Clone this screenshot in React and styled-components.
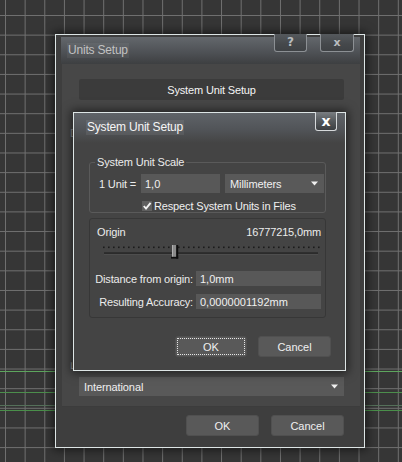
import React from "react";
import styled, { createGlobalStyle } from "styled-components";

const GlobalStyle = createGlobalStyle`
  html, body { margin: 0; padding: 0; background: #363636; }
  body { font-family: "Liberation Sans", Arial, sans-serif; font-size: 11px; }
  * { box-sizing: border-box; }
`;

const Desk = styled.main`
  position: relative;
  width: 402px;
  height: 462px;
  overflow: hidden;
  background-color: #363636;
  background-image:
    linear-gradient(#5da55d, #5da55d),
    linear-gradient(#4c8e4c, #4c8e4c),
    linear-gradient(#55705a, #55705a),
    linear-gradient(#4a8f4a, #4a8f4a),
    linear-gradient(to right, #707070 1px, transparent 1px),
    linear-gradient(to bottom, #707070 1px, transparent 1px);
  background-size: 100% 1px, 100% 1px, 100% 1px, 100% 1px, 19.65px 19.65px, 19.65px 19.65px;
  background-position: 0 371px, 0 392px, 0 405px, 0 410px, 5px 15px, 5px 15px;
  background-repeat: no-repeat, no-repeat, no-repeat, no-repeat, repeat, repeat;
`;

const Window = styled.section`
  position: absolute;
  left: ${(p) => p.$x}px;
  top: ${(p) => p.$y}px;
  width: ${(p) => p.$w}px;
  height: ${(p) => p.$h}px;
  border: 1px solid #dde5e5;
  background: ${(p) => p.$bg};
  display: flex;
  flex-direction: column;
  box-shadow: 0 0 9px 2px rgba(0, 0, 0, 0.55);
  z-index: ${(p) => p.$z};
`;

const TitleBar = styled.header`
  flex: none;
  height: ${(p) => p.$h}px;
  margin: ${(p) => p.$m};
  padding-left: ${(p) => p.$pl}px;
  display: flex;
  align-items: center;
  background: ${(p) =>
    p.$active
      ? "linear-gradient(#5f6368 0%, #515458 55%, #444 100%)"
      : "linear-gradient(#63676c 0%, #4d5054 60%, #3d3f41 100%)"};
`;

const TitleText = styled.span`
  font-size: 12px;
  letter-spacing: -0.2px;
  line-height: 15px;
  padding: 0 1px;
  color: ${(p) => (p.$active ? "#f6f6f6" : "#c2c2c2")};
  background: rgba(255, 255, 255, ${(p) => (p.$active ? 0.07 : 0.05)});
  margin-top: ${(p) => p.$mt || 0}px;
`;

const CaptionGroup = styled.div`
  position: absolute;
  top: -1px;
  left: ${(p) => p.$left}px;
  display: flex;
  gap: 13px;
`;

const CaptionButton = styled.div`
  width: ${(p) => p.$w}px;
  height: ${(p) => p.$h}px;
  border: 1px solid ${(p) => (p.$bright ? "#d6d9db" : "#8c9094")};
  border-top: none;
  border-radius: 0 0 3px 3px;
  background: ${(p) =>
    p.$bright
      ? "linear-gradient(#7a7e82, #55595c 50%, #3c3f42)"
      : "linear-gradient(#55595d, #45484b 60%, #3f4245)"};
  display: flex;
  align-items: center;
  justify-content: center;
  font-family: "DejaVu Sans", sans-serif;
  font-weight: bold;
  font-size: ${(p) => p.$fs}px;
  color: ${(p) => (p.$bright ? "#ffffff" : "#b8bcbf")};
  line-height: 1;
  padding-bottom: 1px;
`;

const OuterBody = styled.div`
  flex: 1;
  display: flex;
  flex-direction: column;
  padding: 0 4px 0 6px;
`;

const Panel = styled.div`
  flex: 1;
  display: flex;
  flex-direction: column;
  background: #474747;
  padding: 15px 16px 10px 17px;
  border-bottom: 1px solid #3c3c3c;
`;

const WideButton = styled.div`
  height: 21px;
  background: #3b3b3b;
  border-radius: 2px;
  color: #f4f4f4;
  display: flex;
  align-items: center;
  justify-content: center;
  letter-spacing: -0.15px;
`;

const HiddenLabel = styled.div`
  margin: ${(p) => p.$m};
  line-height: 13px;
  color: #8a8a8a;
  white-space: nowrap;
  position: relative;
  z-index: ${(p) => (p.$ghost ? 5 : "auto")};
  clip-path: ${(p) => (p.$ghost ? "inset(25% 0 0 0)" : "none")};
`;

const Spacer = styled.div`
  flex: 1;
`;

const Select = styled.div`
  height: 19px;
  width: ${(p) => (p.$w ? `${p.$w}px` : "auto")};
  background: #595959;
  color: #f0f0f0;
  display: flex;
  align-items: center;
  justify-content: space-between;
  padding: 0 6px 0 5px;
  letter-spacing: -0.1px;
`;

const ButtonRow = styled.div`
  display: flex;
  justify-content: flex-end;
  gap: ${(p) => p.$gap}px;
  margin: ${(p) => p.$m};
  padding: ${(p) => p.$p};
`;

const Button = styled.div`
  width: ${(p) => p.$w}px;
  height: 21px;
  background: #595959;
  border-radius: 3px;
  border: 1px solid #505050;
  color: #f0f0f0;
  display: flex;
  align-items: center;
  justify-content: center;
  outline: ${(p) => (p.$focus ? "1px dotted #e6e6e6" : "none")};
  outline-offset: -3px;
`;

const InnerBody = styled.div`
  flex: 1;
  display: flex;
  flex-direction: column;
  padding: 13px 14px 0 15px;
`;

const Group = styled.fieldset`
  margin: ${(p) => p.$m};
  padding: ${(p) => p.$p};
  border: 1px solid ${(p) => p.$border};
  border-radius: 3px;
  min-width: 0;
  color: #ececec;
`;

const Legend = styled.legend`
  padding: 0 2px;
  margin-left: -4px;
  line-height: 13px;
  color: #ececec;
  letter-spacing: -0.15px;
`;

const Row = styled.div`
  display: flex;
  align-items: center;
  height: ${(p) => p.$h}px;
  margin-top: ${(p) => p.$mt || 0}px;
`;

const FieldLabel = styled.span`
  width: ${(p) => p.$w}px;
  flex: none;
  white-space: nowrap;
  color: #ececec;
  letter-spacing: -0.15px;
  margin-right: ${(p) => p.$mr || 0}px;
  display: flex;
  justify-content: ${(p) => (p.$align === "right" ? "flex-end" : "flex-start")};
`;

const Input = styled.div`
  height: ${(p) => p.$h}px;
  width: ${(p) => (p.$w ? `${p.$w}px` : "auto")};
  flex: ${(p) => (p.$w ? "none" : 1)};
  background: #585858;
  color: #f0f0f0;
  display: flex;
  align-items: center;
  padding-left: 4px;
  margin-right: ${(p) => p.$mr || 0}px;
`;

const CheckRow = styled.label`
  display: flex;
  align-items: center;
  gap: 2px;
  height: 12px;
  margin: 7px 0 0 43px;
  color: #f0f0f0;
  letter-spacing: -0.15px;
`;

const OriginRow = styled.div`
  display: flex;
  justify-content: space-between;
  line-height: 13px;
  color: #ececec;
  letter-spacing: -0.15px;
`;

const SliderSvg = styled.svg`
  display: block;
  margin-top: 2px;
  width: 224px;
  height: 20px;
`;

const Arrow = () => (
  <svg width="7" height="5" viewBox="0 0 7 5">
    <path d="M0 0.5 H7 L3.5 4.5 Z" fill="#f0f0f0" />
  </svg>
);

const CheckBox = () => (
  <svg width="10" height="10" viewBox="0 0 10 10">
    <rect x="0" y="0" width="10" height="10" fill="#5f5f5f" />
    <path d="M1.8 5 L4 7.6 L8.6 1.8" fill="none" stroke="#f2f2f2" strokeWidth="1.9" />
  </svg>
);

const Slider = () => {
  const dots = [];
  for (let x = 6; x <= 221; x += 5) dots.push(x);
  return (
    <SliderSvg viewBox="0 0 224 20">
      {dots.map((x) => (
        <rect key={x} x={x} y="5.5" width="1.6" height="1.6" fill="#1c1c1c" />
      ))}
      <rect x="7" y="11.5" width="214" height="1.3" fill="#1a1a1a" />
      <rect x="7" y="12.8" width="214" height="0.8" fill="#555" />
      <rect x="75" y="4" width="4.5" height="12" fill="#8a8a8a" />
      <rect x="75" y="4" width="1" height="12" fill="#b0b0b0" />
      <rect x="79.2" y="4" width="2" height="13.6" fill="#0e0e0e" />
      <rect x="74" y="15.8" width="7.2" height="1.8" fill="#0e0e0e" />
    </SliderSvg>
  );
};

export default function App() {
  return (
    <>
      <GlobalStyle />
      <Desk>
        <Window $x={55} $y={34} $w={310} $h={414} $bg="#3e3e3e" $z={1}>
          <TitleBar $h={27} $m="2px 4px 0 5px" $pl={6}>
            <TitleText>Units Setup</TitleText>
          </TitleBar>
          <CaptionGroup $left={218}>
            <CaptionButton $w={33} $h={18} $fs={12}>?</CaptionButton>
            <CaptionButton $w={34} $h={18} $fs={11}>x</CaptionButton>
          </CaptionGroup>
          <OuterBody>
            <Panel>
              <WideButton>System Unit Setup</WideButton>
              <HiddenLabel $m="27px 0 0 -9px">D</HiddenLabel>
              <Spacer />
              <HiddenLabel $m="0 0 5px -9px" $ghost>
                Lighting Units
              </HiddenLabel>
              <Select>
                <span>International</span>
                <Arrow />
              </Select>
            </Panel>
            <ButtonRow $gap={12} $m="8px 0 0 0" $p="0 16px 11px 0">
              <Button $w={73}>OK</Button>
              <Button $w={73}>Cancel</Button>
            </ButtonRow>
          </OuterBody>
        </Window>

        <Window $x={73} $y={112} $w={273} $h={259} $bg="#444444" $z={2}>
          <TitleBar $h={30} $m="0" $pl={12} $active>
            <TitleText $active $mt={-1}>System Unit Setup</TitleText>
          </TitleBar>
          <CaptionGroup $left={241}>
            <CaptionButton $w={22} $h={19} $fs={14} $bright>
              x
            </CaptionButton>
          </CaptionGroup>
          <InnerBody>
            <Group $m="0 5px 0 0" $p="5px 1px 0 9px" $border="#5a5a5a">
              <Legend>System Unit Scale</Legend>
              <Row $h={19}>
                <FieldLabel $w={42}>1 Unit =</FieldLabel>
                <Input $h={19} $w={79} $mr={5}>
                  1,0
                </Input>
                <Select $w={99}>
                  <span>Millimeters</span>
                  <Arrow />
                </Select>
              </Row>
              <CheckRow>
                <CheckBox />
                <span>Respect System Units in Files</span>
              </CheckRow>
            </Group>
            <Group $m="5px 5px 0 0" $p="7px 4px 8px 7px" $border="#373737">
              <OriginRow>
                <span>Origin</span>
                <span>16777215,0mm</span>
              </OriginRow>
              <Slider />
              <Row $h={15} $mt={10}>
                <FieldLabel $w={96} $mr={3} $align="right">
                  Distance from origin:
                </FieldLabel>
                <Input $h={15}>1,0mm</Input>
              </Row>
              <Row $h={15} $mt={8}>
                <FieldLabel $w={96} $mr={3} $align="right">
                  Resulting Accuracy:
                </FieldLabel>
                <Input $h={15}>0,0000001192mm</Input>
              </Row>
            </Group>
            <ButtonRow $gap={11} $m="18px 0 0 0" $p="0">
              <Button $w={72} $focus>
                OK
              </Button>
              <Button $w={73}>Cancel</Button>
            </ButtonRow>
          </InnerBody>
        </Window>
      </Desk>
    </>
  );
}
